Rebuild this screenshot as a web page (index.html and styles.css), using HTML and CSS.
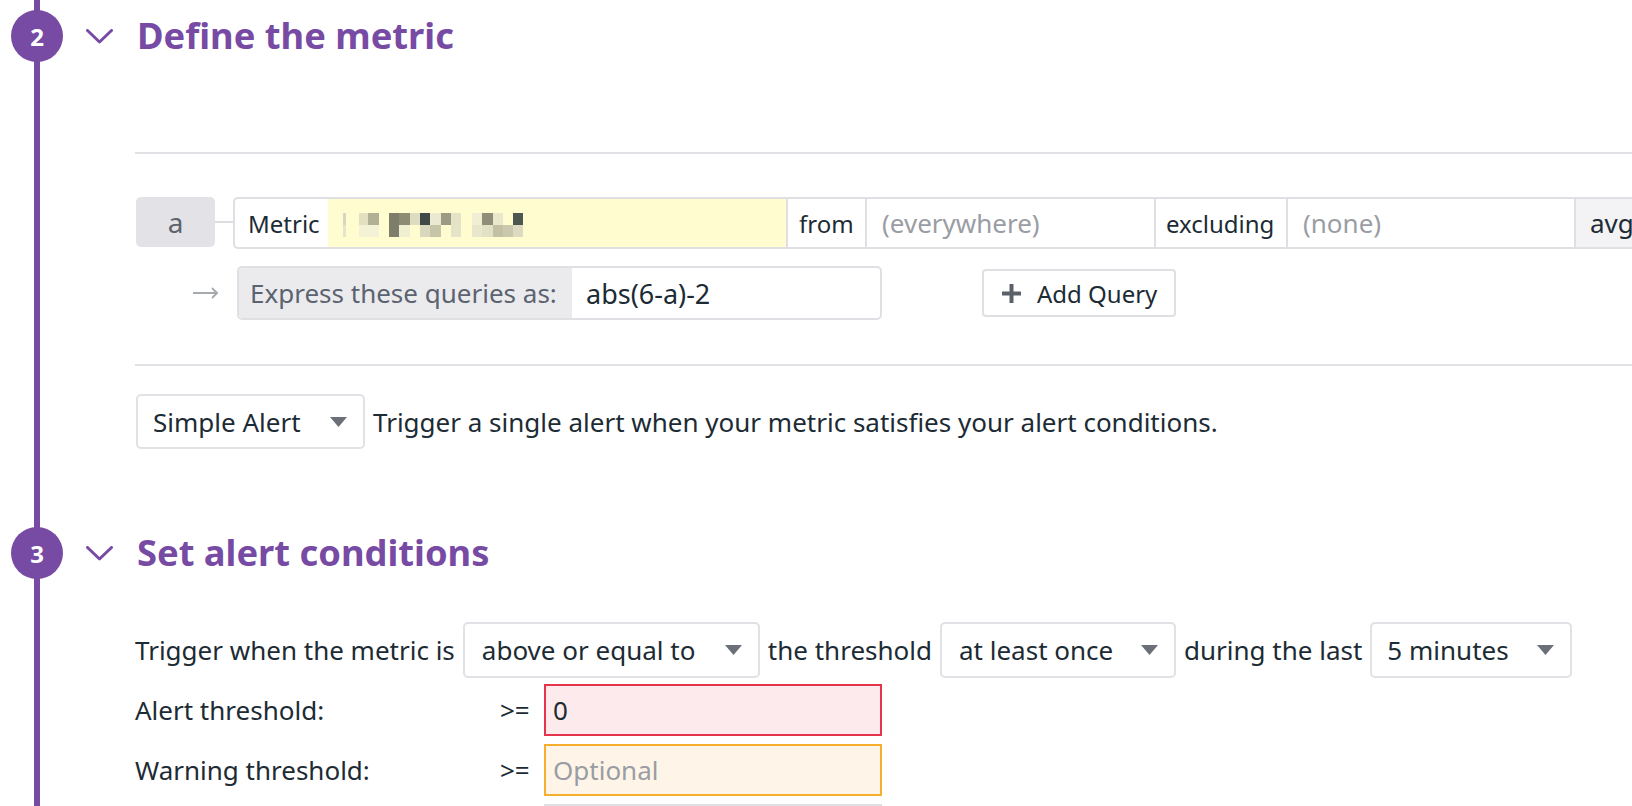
FILE: index.html
```html
<!DOCTYPE html>
<html lang="en">
<head>
<meta charset="utf-8">
<title>Monitor</title>
<link rel="stylesheet" href="styles.css">
</head>
<body>
<div class="steps">
  <section class="step step-metric">
    <header class="step-head">
      <span class="step-num">2</span>
      <svg class="chev" viewBox="0 0 27 15"><polyline points="1.5,1.5 13.5,13 25.5,1.5"/></svg>
      <h2 class="step-title">Define the metric</h2>
    </header>
    <div class="step-body">
      <div class="divider first"></div>
      <div class="query-row">
        <div class="query-name">a</div>
        <div class="connector"></div>
        <div class="query-box">
          <div class="cell label metric-label">Metric</div>
          <div class="cell metric-field">
            <svg class="blur" viewBox="0 0 180 24" width="180" height="24">
              <rect x="0" y="0" width="3" height="12" fill="#d6d5c2"/>
              <rect x="16" y="0" width="9" height="12" fill="#e2e0c0"/>
              <rect x="25" y="0" width="11" height="12" fill="#b2b196"/>
              <rect x="46" y="0" width="10" height="12" fill="#7d7d6a"/>
              <rect x="56" y="0" width="11" height="12" fill="#8c8b74"/>
              <rect x="67" y="0" width="10" height="12" fill="#dddcc0"/>
              <rect x="77" y="0" width="10" height="12" fill="#3f4a48"/>
              <rect x="87" y="0" width="11" height="12" fill="#ebead0"/>
              <rect x="98" y="0" width="10" height="12" fill="#9b9a82"/>
              <rect x="108" y="0" width="10" height="12" fill="#e4e3c8"/>
              <rect x="129" y="0" width="10" height="12" fill="#f0efd4"/>
              <rect x="139" y="0" width="11" height="12" fill="#8f8e78"/>
              <rect x="150" y="0" width="10" height="12" fill="#e9e8cc"/>
              <rect x="170" y="0" width="10" height="12" fill="#4d5650"/>
              <rect x="0" y="12" width="3" height="12" fill="#e6e5cc"/>
              <rect x="16" y="12" width="20" height="12" fill="#f3f2d6"/>
              <rect x="46" y="12" width="10" height="12" fill="#7d7d6a"/>
              <rect x="56" y="12" width="11" height="12" fill="#f0efd2"/>
              <rect x="77" y="12" width="10" height="12" fill="#d9d8bc"/>
              <rect x="87" y="12" width="11" height="12" fill="#c6c5aa"/>
              <rect x="108" y="12" width="10" height="12" fill="#e5e4c8"/>
              <rect x="129" y="12" width="10" height="12" fill="#e8e7cb"/>
              <rect x="139" y="12" width="11" height="12" fill="#e2e1c5"/>
              <rect x="150" y="12" width="10" height="12" fill="#c2c1a3"/>
              <rect x="160" y="12" width="10" height="12" fill="#cac9ad"/>
              <rect x="170" y="12" width="10" height="12" fill="#dcdbc0"/>
            </svg>
          </div>
          <div class="cell label from-label">from</div>
          <div class="cell field from-field">(everywhere)</div>
          <div class="cell label excl-label">excluding</div>
          <div class="cell field excl-field">(none)</div>
          <div class="cell agg">avg</div>
        </div>
      </div>
      <div class="formula-row">
        <svg class="arrow" viewBox="0 0 26 12" width="26" height="12"><line x1="0" y1="6" x2="24" y2="6"/><polyline points="19.5,1.5 24,6 19.5,10.5"/></svg>
        <div class="formula">
          <div class="formula-label">Express these queries as:</div>
          <div class="formula-value">abs(6-a)-2</div>
        </div>
        <button class="add-query" type="button">
          <svg class="plus" viewBox="0 0 21 21" width="21" height="21"><rect x="8.5" y="1" width="4" height="19" rx="0.5"/><rect x="1" y="8.5" width="19" height="4" rx="0.5"/></svg>
          <span>Add Query</span>
        </button>
      </div>
      <div class="divider second"></div>
      <div class="alert-type">
        <div class="select simple-select"><span>Simple Alert</span><svg class="caret" viewBox="0 0 17 10"><polygon points="0,0 17,0 8.5,10"/></svg></div>
        <span class="alert-desc">Trigger a single alert when your metric satisfies your alert conditions.</span>
      </div>
    </div>
  </section>

  <section class="step step-conditions">
    <header class="step-head">
      <span class="step-num">3</span>
      <svg class="chev" viewBox="0 0 27 15"><polyline points="1.5,1.5 13.5,13 25.5,1.5"/></svg>
      <h2 class="step-title">Set alert conditions</h2>
    </header>
    <div class="step-body">
      <div class="trigger-row">
        <span>Trigger when the metric is</span>
        <div class="select cmp-select"><span>above or equal to</span><svg class="caret" viewBox="0 0 17 10"><polygon points="0,0 17,0 8.5,10"/></svg></div>
        <span>the threshold</span>
        <div class="select freq-select"><span>at least once</span><svg class="caret" viewBox="0 0 17 10"><polygon points="0,0 17,0 8.5,10"/></svg></div>
        <span>during the last</span>
        <div class="select window-select"><span>5 minutes</span><svg class="caret" viewBox="0 0 17 10"><polygon points="0,0 17,0 8.5,10"/></svg></div>
      </div>
      <div class="thresholds">
        <div class="threshold-row">
          <span class="th-label">Alert threshold:</span>
          <span class="th-op">&gt;=</span>
          <div class="th-input alert">0</div>
        </div>
        <div class="threshold-row">
          <span class="th-label">Warning threshold:</span>
          <span class="th-op">&gt;=</span>
          <div class="th-input warning placeholder">Optional</div>
        </div>
        <div class="threshold-row">
          <span class="th-label"></span>
          <span class="th-op"></span>
          <div class="th-input plain"></div>
        </div>
      </div>
    </div>
  </section>
</div>
</body>
</html>
```

FILE: styles.css
```css
html, body {
  margin: 0;
  padding: 0;
  overflow: hidden;
  background: #ffffff;
}

body {
  width: 1632px;
  height: 806px;
  font-family: "Noto Sans", "Open Sans", sans-serif;
  font-size: 26px;
  color: #1c2b34;
}

.steps {
  position: relative;
  padding-top: 10px;
}

.steps::before {
  content: "";
  position: absolute;
  left: 34px;
  top: 0;
  bottom: 0;
  width: 6px;
  background: #774aa4;
}

/* step header */
.step-head {
  display: flex;
  align-items: center;
  height: 52px;
}

.step-num {
  position: relative;
  z-index: 1;
  width: 52px;
  height: 52px;
  margin-left: 11px;
  border-radius: 50%;
  background: #774aa4;
  color: #ffffff;
  font-weight: 700;
  font-size: 24px;
  display: flex;
  align-items: center;
  justify-content: center;
}

.chev {
  width: 27px;
  height: 15px;
  margin-left: 23px;
  fill: none;
  stroke: #774aa4;
  stroke-width: 3;
  stroke-linecap: round;
  stroke-linejoin: round;
}

.step-title {
  margin: 0 0 0 24px;
  font-size: 36.3px;
  font-weight: 700;
  line-height: 1;
  color: #774aa4;
  position: relative;
  top: -1px;
}

.step-body {
  padding-left: 135px;
}

.divider {
  height: 2px;
  background: #e1e0e5;
}

.divider.first {
  margin-top: 90px;
}

/* query row */
.query-row {
  display: flex;
  align-items: flex-start;
  margin-top: 43px;
  white-space: nowrap;
}

.query-name {
  flex: none;
  width: 79px;
  height: 50px;
  margin-left: 1px;
  border-radius: 5px;
  background: #e2e2e7;
  color: #5d636b;
  font-size: 28px;
  display: flex;
  align-items: center;
  justify-content: center;
}

.connector {
  flex: none;
  width: 18px;
  height: 2px;
  margin-top: 24px;
  background: #dcdce1;
}

.query-box {
  flex: none;
  display: flex;
  height: 52px;
  box-sizing: border-box;
  border: 2px solid #dfdfe4;
  border-right: none;
  border-radius: 5px 0 0 5px;
}

.cell {
  flex: none;
  box-sizing: border-box;
  display: flex;
  align-items: center;
  height: 100%;
}

.label {
  border-left: 2px solid #dfdfe4;
  padding-left: 11px;
  font-size: 24px;
}

.metric-label {
  border-left: none;
  width: 93px;
  padding-left: 13px;
}

.metric-field {
  width: 458px;
  background: #fffdd0;
  padding-left: 15px;
}

.blur {
  display: block;
  margin-top: 4px;
}

.from-label {
  width: 79px;
}

.field {
  border-left: 2px solid #dfdfe4;
  padding-left: 15px;
  color: #9a9da3;
}

.from-field {
  width: 289px;
}

.excl-label {
  width: 132px;
  padding-left: 10px;
}

.excl-field {
  width: 288px;
}

.agg {
  width: 120px;
  border-left: 2px solid #dfdfe4;
  background: #f3f3f5;
  padding-left: 14px;
}

/* formula row */
.formula-row {
  display: flex;
  align-items: center;
  margin-top: 17px;
  white-space: nowrap;
}

.arrow {
  flex: none;
  margin-left: 58px;
  fill: none;
  stroke: #a6a9ae;
  stroke-width: 1.8;
  stroke-linecap: round;
  stroke-linejoin: round;
}

.formula {
  flex: none;
  display: flex;
  width: 645px;
  height: 54px;
  margin-left: 18px;
  box-sizing: border-box;
  border: 2px solid #dfdfe4;
  border-radius: 5px;
  overflow: hidden;
}

.formula-label {
  width: 333px;
  background: #ebebee;
  color: #5c6370;
  padding-left: 11px;
  box-sizing: border-box;
  display: flex;
  align-items: center;
}

.formula-value {
  padding-left: 14px;
  display: flex;
  align-items: center;
  font-size: 27px;
}

.add-query {
  flex: none;
  display: flex;
  align-items: center;
  width: 194px;
  height: 48px;
  margin-left: 100px;
  padding: 0 0 0 17px;
  box-sizing: border-box;
  border: 2px solid #dfdfe4;
  border-radius: 4px;
  background: #ffffff;
  font: inherit;
  font-size: 24px;
  color: #1c2b34;
}

.plus {
  fill: #5c6169;
  margin-right: 15px;
}

.divider.second {
  margin-top: 44px;
}

/* selects */
.select {
  flex: none;
  display: flex;
  align-items: center;
  justify-content: space-between;
  box-sizing: border-box;
  height: 55px;
  padding: 0 16px 0 15px;
  border: 2px solid #e1e1e6;
  border-radius: 5px;
  background: #ffffff;
}

.caret {
  width: 17px;
  height: 10px;
  fill: #6b6f77;
}

.alert-type {
  display: flex;
  align-items: center;
  margin-top: 28px;
  white-space: nowrap;
}

.simple-select {
  width: 229px;
  margin-left: 1px;
}

.alert-desc {
  margin-left: 8px;
}

/* step 3 */
.step-conditions {
  margin-top: 78px;
}

.trigger-row {
  display: flex;
  align-items: center;
  gap: 8px;
  margin-top: 43px;
  white-space: nowrap;
}

.trigger-row .select {
  height: 56px;
}

.cmp-select {
  width: 297px;
  padding-left: 17px;
}

.freq-select {
  width: 236px;
  padding-left: 17px;
}

.window-select {
  width: 202px;
  padding-left: 15px;
}

.thresholds {
  margin-top: 6px;
  display: flex;
  flex-direction: column;
  gap: 8px;
}

.threshold-row {
  display: flex;
  align-items: center;
}

.th-label {
  width: 365px;
  flex: none;
}

.th-op {
  width: 44px;
  flex: none;
}

.th-input {
  flex: none;
  width: 338px;
  height: 52px;
  box-sizing: border-box;
  padding-left: 7px;
  display: flex;
  align-items: center;
  border: 2px solid #dfdfe4;
}

.th-input.alert {
  background: #fdeaec;
  border-color: #e5344b;
}

.th-input.warning {
  background: #fef5e8;
  border-color: #f6ae2d;
}

.placeholder {
  color: #9a9da3;
}
```
